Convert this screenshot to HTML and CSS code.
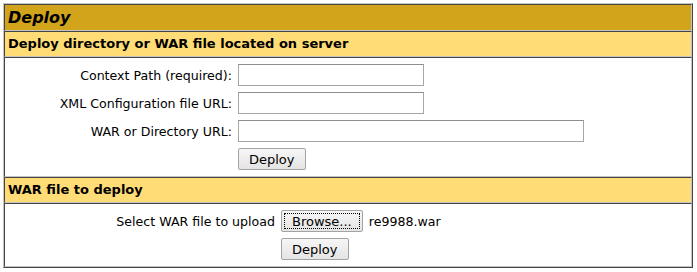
FILE: index.html
```html
<!DOCTYPE html>
<html>
<head>
  <title>Tomcat Manager - Deploy</title>
  <link rel="stylesheet" href="styles.css">
</head>
<body>

  <div class="manager">
    <div class="title">Deploy</div>

    <div class="header">Deploy directory or WAR file located on server</div>
    <div class="cell">
      <form class="grid server-grid">
        <label class="label" for="deployPath">Context Path (required):</label>
        <input class="field short" id="deployPath" type="text">

        <label class="label" for="deployConfig">XML Configuration file URL:</label>
        <input class="field short" id="deployConfig" type="text">

        <label class="label" for="deployWar">WAR or Directory URL:</label>
        <input class="field long" id="deployWar" type="text">

        <span></span>
        <button class="btn" type="button">Deploy</button>
      </form>
    </div>

    <div class="header">WAR file to deploy</div>
    <div class="cell">
      <form class="grid upload-grid">
        <span class="label">Select WAR file to upload</span>
        <span class="file">
          <button class="btn browse" type="button">Browse...</button>
          <span class="filename">re9988.war</span>
        </span>

        <span></span>
        <button class="btn" type="button">Deploy</button>
      </form>
    </div>
  </div>

</body>
</html>
```

FILE: styles.css
```css
body {
  margin: 3px;
  font-family: 'DejaVu Sans', sans-serif;
  font-size: 16px;
  color: #000;
  background: white;
}

.manager {
  width: 688px;
  border: 1px solid;
  border-color: #c4c4c4 #454545 #454545 #c4c4c4;
}

.title, .header, .cell {
  padding: 3px;
  border: 1px solid;
  border-color: #454545 #c4c4c4 #c4c4c4 #454545;
}

.title {
  background: #D2A41C;
  font-style: italic;
  font-weight: bold;
  line-height: 19px;
}

.header {
  background: #FFDC75;
  font-weight: bold;
  font-size: 13px;
  line-height: 18px;
}

.grid {
  display: grid;
  gap: 6px;
  padding: 3px;
  margin: 0;
  font-size: 12.6px;
  align-items: center;
}

.server-grid {
  grid-template-columns: 221px 1fr;
}

.upload-grid {
  grid-template-columns: 264px 1fr;
}

.label {
  text-align: right;
}

.field {
  box-sizing: border-box;
  height: 22px;
  margin: 0;
  border: 1px solid #a6a6a6;
  border-top-color: #8e8e8e;
  background: white;
}

.short {
  width: 186px;
}

.long {
  width: 346px;
}

.btn {
  box-sizing: border-box;
  height: 22px;
  margin: 0;
  padding: 0 10px;
  justify-self: start;
  font-family: 'DejaVu Sans', sans-serif;
  font-size: 13px;
  color: #000;
  background: linear-gradient(#f6f6f6, #e4e4e4);
  border: 1px solid #a3a3a3;
  border-radius: 2px;
}

.browse {
  outline: 1px dotted #000;
  outline-offset: -4px;
}

.file {
  display: flex;
  align-items: center;
  gap: 6px;
}
```
